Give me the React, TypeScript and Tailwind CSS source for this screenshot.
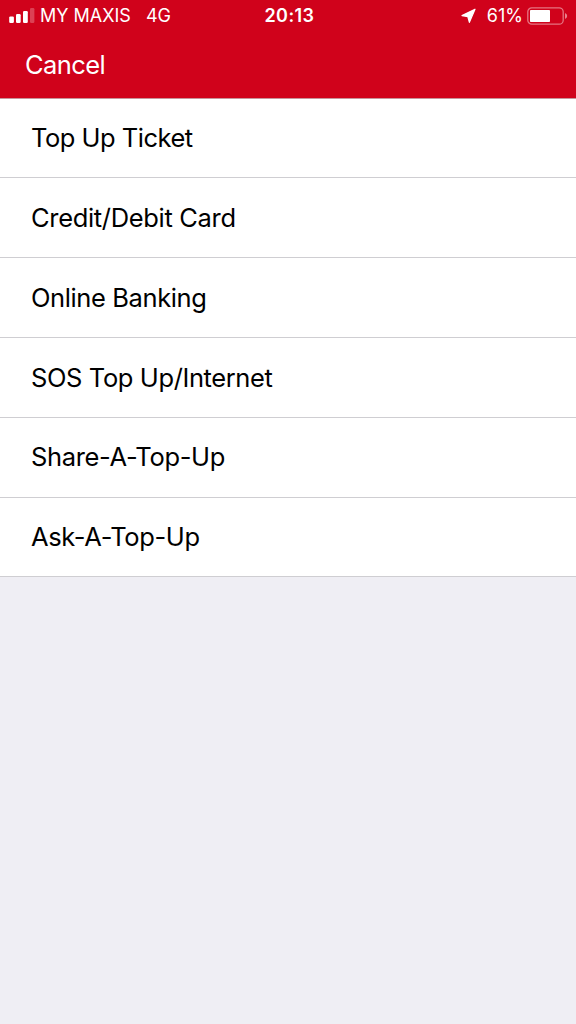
const items: [string, string][] = [
  ["Top Up Ticket", "tracking-[-0.5px]"],
  ["Credit/Debit Card", "tracking-[-0.33px]"],
  ["Online Banking", "tracking-[-0.39px]"],
  ["SOS Top Up/Internet", "tracking-[-0.39px]"],
  ["Share-A-Top-Up", "tracking-[-0.36px]"],
  ["Ask-A-Top-Up", "tracking-[-0.36px]"],
];

export default function App() {
  return (
    <div className="min-h-screen bg-[#efeef4] font-['Inter',sans-serif] text-black">
      <header className="h-[98px] bg-[#d0021b] text-white">
        <div className="flex h-8 items-center justify-between pl-[9px] pr-[8px] text-[18px] leading-8">
          <div className="flex w-[255.5px] items-center">
            <svg width="26" height="16" viewBox="0 0 26 16" fill="#fff">
              <rect x="0.2" y="8.4" width="4.7" height="6.6" rx="1.2" />
              <rect x="7" y="6" width="4.7" height="9" rx="1.2" />
              <rect x="14" y="3" width="4.8" height="12" rx="1.2" />
              <rect x="21" y="0" width="4.4" height="15" rx="1.2" opacity=".25" />
            </svg>
            <span className="ml-[5px]">MY MAXIS</span>
            <span className="ml-[15px]">4G</span>
          </div>
          <span className="flex-1 font-semibold tracking-[0.4px]">20:13</span>
          <div className="flex items-center">
            <svg width="15" height="16" viewBox="0 0 15 16" fill="#fff" stroke="#fff" strokeWidth="1.2" strokeLinejoin="round">
              <path d="M14 1.2 1 7.6 6.8 8.6 8.4 14.3Z" />
            </svg>
            <span className="ml-[11px]">61%</span>
            <svg className="ml-[4px]" width="41" height="18" viewBox="0 0 41 18">
              <rect x=".8" y=".8" width="35.4" height="16.4" rx="4" fill="none" stroke="#fff" strokeWidth="1.3" opacity=".45" />
              <rect x="3" y="3" width="20" height="12" rx=".8" fill="#fff" />
              <path d="M38 6q2.2 1 2.2 3T38 12Z" fill="#fff" opacity=".5" />
            </svg>
          </div>
        </div>
        <button className="block pl-[25px] pt-[17px] text-[25.5px] leading-8 tracking-[-0.6px]">Cancel</button>
      </header>
      <ul className="border-t border-[#c7949b]">
        {items.map(([label, spacing]) => (
          <li key={label} className="flex h-[79.9px] items-center border-b border-[#cfced2] bg-white pl-[31px] pt-px text-[25.5px] first:h-[79px] first:pt-0">
            <span className={spacing}>{label}</span>
          </li>
        ))}
      </ul>
    </div>
  );
}
